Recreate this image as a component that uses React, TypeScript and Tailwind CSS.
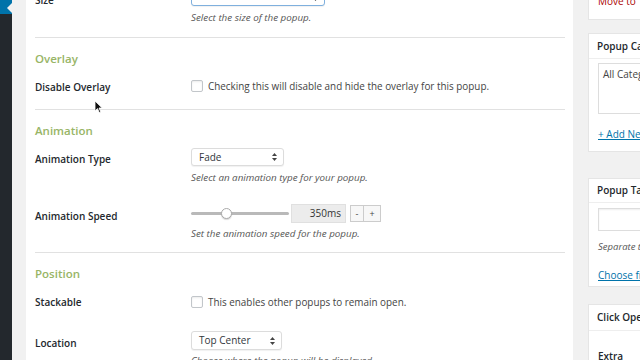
import React from "react";

const font = { fontFamily: '"Open Sans", "Liberation Sans", sans-serif' };

function Arrows() {
  return (
    <svg width="5" height="8" viewBox="0 0 5 8" className="shrink-0">
      <path d="M2.5 0 L5 3 L0 3 Z" fill="#444" />
      <path d="M2.5 8 L5 5 L0 5 Z" fill="#444" />
    </svg>
  );
}

function Select({ label, w, h = "h-[18px]", focus = false }: { label: string; w: string; h?: string; focus?: boolean }) {
  return (
    <div
      className={`${w} ${h} flex items-center justify-between pl-[7px] pr-[6px] bg-white rounded-[3px] border ${
        focus ? "border-[#7fb0de]" : "border-[#dcdcdc]"
      } shadow-[0_1px_1px_rgba(0,0,0,0.06)] text-[10px] text-[#32373c]`}
    >
      <span>{label}</span>
      <Arrows />
    </div>
  );
}

function Checkbox() {
  return <div className="w-[12px] h-[12px] shrink-0 bg-white border border-[#c2c6ca] rounded-[2px] shadow-[inset_0_1px_2px_rgba(0,0,0,0.08)]" />;
}

function Desc({ children, mt }: { children: React.ReactNode; mt: string }) {
  return <div className={`${mt} h-[12px] leading-[12px] text-[9.8px] italic text-[#555]`}>{children}</div>;
}

function Heading({ children, mt }: { children: React.ReactNode; mt: string }) {
  return <div className={`${mt} h-[16px] leading-[16px] text-[11.5px] font-semibold text-[#98b566]`}>{children}</div>;
}

function Label({ children, pt }: { children: React.ReactNode; pt: string }) {
  return (
    <div className={`w-[156px] shrink-0 ${pt}`}>
      <div className="h-[12px] leading-[12px] text-[10px] font-semibold text-[#23282d]">{children}</div>
    </div>
  );
}

function Sep({ mt }: { mt: string }) {
  return <div className={`${mt} border-t border-[#e1e1e1]`} />;
}

export default function App() {
  return (
    <div className="relative w-[640px] h-[360px] overflow-hidden flex bg-[#f1f1f1]" style={font}>
      {/* admin menu */}
      <div className="w-[12px] shrink-0 bg-[#23282d] flex flex-col">
        <div className="relative h-[14px] bg-[#0073aa]">
          <svg className="absolute right-0 top-[3px]" width="5" height="10" viewBox="0 0 5 10">
            <path d="M5 0 L0 5 L5 10 Z" fill="#f1f1f1" />
          </svg>
        </div>
      </div>
      <div className="w-[14px] shrink-0" />

      {/* main panel */}
      <div className="w-[547px] shrink-0 bg-white pl-[9px] pr-[8px] flex flex-col">
        {/* size row */}
        <div className="-mt-[13px] flex">
          <Label pt="pt-[7px]">Size</Label>
          <div className="flex flex-col">
            <Select label="Auto" w="w-[134px]" h="h-[19px]" focus />
            <Desc mt="mt-[6px]">Select the size of the popup.</Desc>
          </div>
        </div>
        <Sep mt="mt-[13px]" />

        <Heading mt="mt-[13px]">Overlay</Heading>
        <div className="mt-[13px] flex">
          <Label pt="pt-[1px]">Disable Overlay</Label>
          <div className="flex items-center gap-[5px] h-[12px]">
            <Checkbox />
            <span className="text-[9.9px] text-[#444] leading-[12px]">
              Checking this will disable and hide the overlay for this popup.
            </span>
          </div>
        </div>
        <Sep mt="mt-[16px]" />

        <Heading mt="mt-[13px]">Animation</Heading>
        <div className="mt-[9px] flex">
          <Label pt="pt-[5px]">Animation Type</Label>
          <div className="flex flex-col">
            <Select label="Fade" w="w-[93px]" />
            <Desc mt="mt-[6px]">Select an animation type for your popup.</Desc>
          </div>
        </div>
        <div className="mt-[20px] flex">
          <Label pt="pt-[6px]">Animation Speed</Label>
          <div className="flex flex-col">
            <div className="flex items-center h-[19px]">
              <div className="relative w-[98px] h-[19px] flex items-center">
                <div className="w-full h-[3px] bg-[#b9b9b9] rounded-full" />
                <div className="absolute left-[30px] top-[4px] w-[11px] h-[11px] rounded-full bg-white border border-[#aaa] shadow-[0_1px_1px_rgba(0,0,0,0.15)]" />
              </div>
              <div className="ml-[2px] w-[55px] h-[19px] bg-[#ececec] border border-[#e0e0e0] flex items-center justify-end pr-[4px] text-[10px] text-[#333]">
                350ms
              </div>
              <div className="ml-[4px] flex">
                <div className="w-[14px] h-[17px] bg-[#f7f7f7] border border-[#ccc] flex items-center justify-center text-[9px] text-[#444]">-</div>
                <div className="w-[17px] h-[17px] bg-[#f7f7f7] border border-l-0 border-[#ccc] flex items-center justify-center text-[9px] text-[#444]">+</div>
              </div>
            </div>
            <Desc mt="mt-[5px]">Set the animation speed for the popup.</Desc>
          </div>
        </div>
        <Sep mt="mt-[12px]" />

        <Heading mt="mt-[13px]">Position</Heading>
        <div className="mt-[14px] flex">
          <Label pt="pt-[0px]">Stackable</Label>
          <div className="flex items-center gap-[5px] h-[12px]">
            <Checkbox />
            <span className="text-[9.9px] text-[#444] leading-[12px]">This enables other popups to remain open.</span>
          </div>
        </div>
        <div className="mt-[23px] flex">
          <Label pt="pt-[6px]">Location</Label>
          <div className="flex flex-col">
            <Select label="Top Center" w="w-[91px]" h="h-[19px]" />
            <Desc mt="mt-[5px]">Choose where the popup will be displayed.</Desc>
          </div>
        </div>
      </div>

      <div className="w-[15px] shrink-0" />

      {/* right column */}
      <div className="w-[200px] shrink-0 flex flex-col text-[10px]">
        <div className="-mt-[10px] bg-white border border-[#e5e5e5] pl-[9px] pt-[4px] pb-[12px]">
          <div className="h-[12px] leading-[12px] text-[#a00]">Move to Trash</div>
        </div>

        <div className="mt-[13px] bg-white border border-[#e5e5e5]">
          <div className="h-[25px] flex items-center pl-[8px] border-b border-[#eee] font-semibold text-[#23282d]">Popup Categories</div>
          <div className="pl-[9px] pb-[11px]">
            <div className="mt-[4px] h-[51px] border border-[#ddd] pl-[4px] pt-[3px] text-[#444]">All Categories</div>
            <div className="mt-[14px] h-[12px] leading-[12px] text-[#0073aa] underline">+ Add New Category</div>
          </div>
        </div>

        <div className="mt-[26px] bg-white border border-[#e5e5e5]">
          <div className="h-[24px] flex items-center pl-[8px] border-b border-[#eee] font-semibold text-[#23282d]">Popup Tags</div>
          <div className="pl-[9px] pb-[5px]">
            <div className="mt-[5px] h-[23px] border border-[#ddd] shadow-[inset_0_1px_2px_rgba(0,0,0,0.07)]" />
            <div className="mt-[10px] h-[12px] leading-[12px] italic text-[9.5px] text-[#555]">Separate tags with commas</div>
            <div className="mt-[16px] h-[12px] leading-[12px] text-[#0073aa] underline">Choose from the most used tags</div>
          </div>
        </div>

        <div className="mt-[17px] bg-white border border-[#e5e5e5] flex-1">
          <div className="h-[26px] flex items-center pl-[8px] border-b border-[#eee] font-semibold text-[#23282d]">Click Open</div>
          <div className="pl-[9px]">
            <div className="mt-[19px] h-[12px] leading-[12px] font-semibold text-[#23282d]">Extra</div>
          </div>
        </div>
      </div>

      {/* mouse cursor */}
      <svg className="absolute left-[94px] top-[100px]" width="9" height="14" viewBox="0 0 9 14">
        <path d="M1 1 L1 11 L3.5 8.6 L5.3 12.6 L6.8 12 L5 8 L8.2 8 Z" fill="#111" stroke="#fff" strokeWidth="0.8" />
      </svg>
    </div>
  );
}
